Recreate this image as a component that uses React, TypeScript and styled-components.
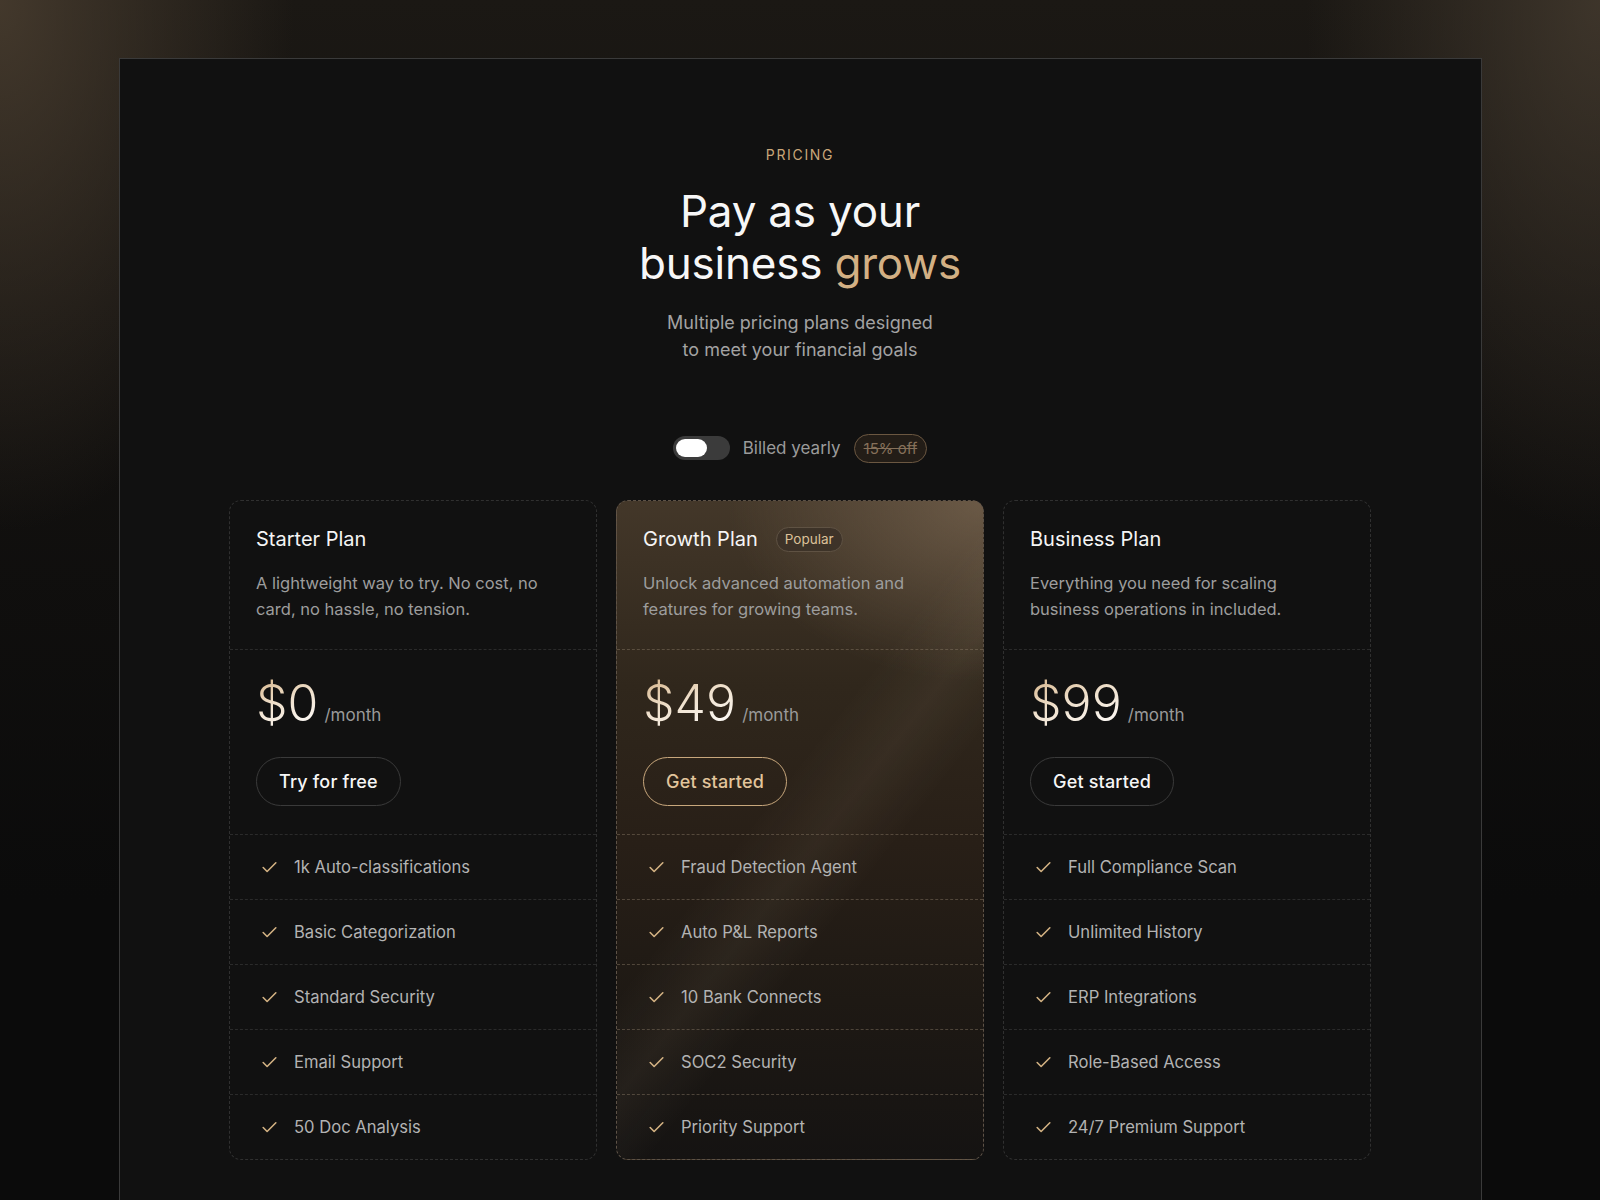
import styled, { createGlobalStyle } from 'styled-components';
import { useState } from 'react';

/* Styles */
const GlobalStyle = createGlobalStyle`
  html, body {
    margin: 0;
    padding: 0;
    height: 1200px;
    overflow: hidden;
  }

  body {
    font-family: Inter, 'Noto Sans', 'Liberation Sans', sans-serif;
    background:
      radial-gradient(ellipse 420px 760px at 0% 0%, rgba(74, 62, 48, 0.85), transparent 70%),
      radial-gradient(ellipse 420px 760px at 100% 0%, rgba(70, 60, 48, 0.8), transparent 70%),
      linear-gradient(180deg, #1b1814 0px, #141210 300px, #0b0b0b 900px);
    color: #f4f4f4;
  }
`;

const Frame = styled.main`
  box-sizing: border-box;
  width: 1363px;
  height: 1142px;
  margin: 58px auto 0;
  border: 1px solid #3a3a3a;
  border-bottom: none;
  background: #111111;
  padding-top: 86px;

  display: flex;
  flex-direction: column;
  align-items: center;
`;

const Eyebrow = styled.div`
  font-size: 14px;
  line-height: 20px;
  letter-spacing: 0.12em;
  color: #c9a679;
  text-transform: uppercase;
`;

const Title = styled.h1`
  margin: 20px 0 0;
  font-size: 44px;
  line-height: 52px;
  font-weight: 400;
  letter-spacing: -0.005em;
  text-align: center;
  color: #f7f7f7;

  span {
    color: #d3b084;
  }
`;

const Subtitle = styled.p`
  margin: 20px 0 0;
  font-size: 18px;
  line-height: 27px;
  text-align: center;
  color: #a3a3a3;
`;

const BillingRow = styled.div`
  margin-top: 70px;
  height: 30px;

  display: flex;
  align-items: center;
  gap: 13px;
`;

const Switch = styled.button<{ $on: boolean }>`
  width: 57px;
  height: 24px;
  padding: 3px;
  border: none;
  border-radius: 12px;
  background: #3b3b3b;
  cursor: pointer;

  display: flex;
  justify-content: ${(p) => (p.$on ? 'flex-end' : 'flex-start')};

  &::after {
    content: '';
    width: 31px;
    height: 18px;
    border-radius: 9px;
    background: #ffffff;
  }
`;

const BillingLabel = styled.span`
  font-size: 17px;
  color: #9b9b9b;
`;

const OffBadge = styled.span`
  box-sizing: border-box;
  height: 29px;
  padding: 0 9px;
  border: 1px solid #6b5741;
  border-radius: 15px;
  background: #231d17;
  font-size: 15px;
  color: #85705a;
  text-decoration: line-through;

  display: flex;
  align-items: center;
`;

const Cards = styled.div`
  margin-top: 37px;

  display: grid;
  grid-template-columns: repeat(3, 368px);
  gap: 19px;
`;

const Card = styled.section<{ $featured?: boolean }>`
  border: 1px dashed ${(p) => (p.$featured ? '#5d5247' : '#303030')};
  border-radius: 12px;
  overflow: hidden;
  background: ${(p) =>
    p.$featured
      ? `linear-gradient(128deg, transparent 44%, rgba(255, 226, 186, 0.05) 53%, transparent 62%),
         radial-gradient(ellipse 340px 240px at 100% 0%, rgba(128, 108, 86, 0.65), transparent 75%),
         linear-gradient(180deg, #433729 0%, #30271c 28%, #281f17 52%, #1e1914 76%, #151312 100%)`
      : '#111111'};

  display: flex;
  flex-direction: column;
`;

const Section = styled.div<{ $featured?: boolean }>`
  border-bottom: 1px dashed ${(p) => (p.$featured ? 'rgba(140, 124, 104, 0.45)' : '#2b2b2b')};
`;

const Header = styled(Section)`
  padding: 24px 26px 27px;
`;

const PlanName = styled.div`
  font-size: 20px;
  line-height: 28px;
  color: #f5f5f5;

  display: flex;
  align-items: center;
  gap: 18px;
`;

const PopularBadge = styled.span`
  box-sizing: border-box;
  height: 25px;
  padding: 0 8px;
  border: 1px solid #5f5243;
  border-radius: 13px;
  background: rgba(60, 50, 40, 0.9);
  font-size: 13.5px;
  color: #dcc098;

  display: flex;
  align-items: center;
`;

const Description = styled.p`
  margin: 17px 0 0;
  max-width: 300px;
  font-size: 16.5px;
  line-height: 26px;
  color: #9d9d9d;
`;

const PriceBlock = styled(Section)`
  padding: 28px 26px 28px;
`;

const PriceRow = styled.div`
  display: flex;
  align-items: baseline;
  gap: 6px;
`;

const Amount = styled.span`
  font-size: 50px;
  line-height: 50px;
  font-weight: 300;
  background: linear-gradient(160deg, #d6b58b 0%, #efe0cc 45%, #ffffff 100%);
  -webkit-background-clip: text;
  background-clip: text;
  color: transparent;
`;

const Period = styled.span`
  font-size: 17px;
  color: #9a9a9a;
`;

const Cta = styled.button<{ $featured?: boolean }>`
  box-sizing: border-box;
  margin-top: 29px;
  height: 49px;
  padding: 0 22px;
  border: 1px solid ${(p) => (p.$featured ? '#c8a77c' : '#3a3a3a')};
  border-radius: 25px;
  background: transparent;
  font-family: inherit;
  font-size: 18px;
  font-weight: 500;
  letter-spacing: 0.01em;
  color: ${(p) => (p.$featured ? '#e2c59c' : '#f6f6f6')};
  cursor: pointer;
`;

const Feature = styled(Section)`
  height: 64px;
  padding: 0 30px;

  display: flex;
  align-items: center;
  gap: 15px;

  &:last-child {
    border-bottom: none;
  }

  svg {
    flex-shrink: 0;
  }
`;

const FeatureText = styled.span`
  font-size: 16.6px;
  color: #b3b3b3;
`;

const CheckIcon = () => (
  <svg width="19" height="19" viewBox="0 0 24 24" fill="none" stroke="#d4b384" strokeWidth="2" strokeLinecap="round" strokeLinejoin="round">
    <path d="M20 6 9 17l-5-5" />
  </svg>
);

const plans = [
  {
    name: 'Starter Plan',
    description: 'A lightweight way to try. No cost, no card, no hassle, no tension.',
    price: '$0',
    cta: 'Try for free',
    features: ['1k Auto-classifications', 'Basic Categorization', 'Standard Security', 'Email Support', '50 Doc Analysis'],
  },
  {
    name: 'Growth Plan',
    popular: true,
    description: 'Unlock advanced automation and features for growing teams.',
    price: '$49',
    cta: 'Get started',
    features: ['Fraud Detection Agent', 'Auto P&L Reports', '10 Bank Connects', 'SOC2 Security', 'Priority Support'],
  },
  {
    name: 'Business Plan',
    description: 'Everything you need for scaling business operations in included.',
    price: '$99',
    cta: 'Get started',
    features: ['Full Compliance Scan', 'Unlimited History', 'ERP Integrations', 'Role-Based Access', '24/7 Premium Support'],
  },
];

function App() {
  const [yearly, setYearly] = useState(false);

  return (
    <>
      <GlobalStyle />
      <Frame>
        <Eyebrow>Pricing</Eyebrow>
        <Title>
          Pay as your
          <br />
          business <span>grows</span>
        </Title>
        <Subtitle>
          Multiple pricing plans designed
          <br />
          to meet your financial goals
        </Subtitle>

        <BillingRow>
          <Switch $on={yearly} aria-label="billing" onClick={() => setYearly(!yearly)} />
          <BillingLabel>Billed yearly</BillingLabel>
          <OffBadge>15% off</OffBadge>
        </BillingRow>

        <Cards>
          {plans.map((plan) => (
            <Card key={plan.name} $featured={plan.popular}>
              <Header $featured={plan.popular}>
                <PlanName>
                  {plan.name}
                  {plan.popular && <PopularBadge>Popular</PopularBadge>}
                </PlanName>
                <Description>{plan.description}</Description>
              </Header>
              <PriceBlock $featured={plan.popular}>
                <PriceRow>
                  <Amount>{plan.price}</Amount>
                  <Period>/month</Period>
                </PriceRow>
                <Cta $featured={plan.popular}>{plan.cta}</Cta>
              </PriceBlock>
              {plan.features.map((feature) => (
                <Feature key={feature} $featured={plan.popular}>
                  <CheckIcon />
                  <FeatureText>{feature}</FeatureText>
                </Feature>
              ))}
            </Card>
          ))}
        </Cards>
      </Frame>
    </>
  );
}

export default App;
